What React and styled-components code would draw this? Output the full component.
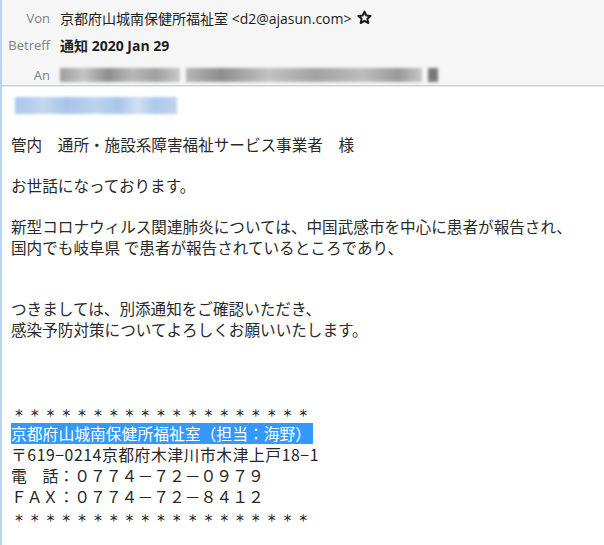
import React from 'react';
import styled, {createGlobalStyle} from 'styled-components';

const GlobalStyle = createGlobalStyle`
    html, body {
        margin:0;
        padding:0;
        background:#fff;
    }
`;

const Frame = styled.div`
    height:545px;
    overflow:hidden;
    border-left:2px solid #b9d4ee;
    box-sizing:border-box;
    background:#fff;
`;

const Header = styled.div`
    background:#f6f6f6;
    border-bottom:1px solid #c9ced3;
    box-shadow:0 1px 0 #e6edf3;
    height:86px;
    box-sizing:border-box;
    padding-top:4px;
    font-family:"Open Sans", "Noto Sans CJK JP", sans-serif;
`;

const HeaderRow = styled.div`
    display:grid;
    grid-template-columns:48px 1fr;
    column-gap:10px;
    align-items:center;
    height:27px;
    margin-top:${p => p.$offset || 0}px;
`;

const Label = styled.div`
    text-align:right;
    color:#808080;
    font-size:13px;
`;

const Value = styled.div`
    display:flex;
    align-items:center;
    gap:4px;
    color:#1e1e1e;
    font-size:14px;
    font-weight:${p => (p.$bold ? 700 : 400)};
    white-space:nowrap;
`;

const BlurGroup = styled.div`
    display:flex;
    align-items:center;
    gap:6px;
    filter:blur(1.6px);
`;

const BlurPiece = styled.div`
    height:14px;
    width:${p => p.$w}px;
    background:${p => p.$bg};
`;

const Body = styled.div`
    padding:11px 0 0 9px;
`;

const BlueBlur = styled.div`
    margin-left:4px;
    width:162px;
    height:17px;
    filter:blur(1.5px);
    background:linear-gradient(90deg, #a9c6ea 0%, #c2d6f0 18%, #a8c4e8 32%, #bcd3ef 50%, #a9c5ea 64%, #d2e0f3 76%, #adc8ea 86%, #bfd4ef 100%);
`;

const Text = styled.div`
    margin-top:20px;
    font-family:"Noto Sans CJK JP", "Noto Sans", sans-serif;
    font-size:15.6px;
    line-height:20.5px;
    color:#2a2a2a;
    white-space:pre;
`;

const Line = styled.div`
    height:20.5px;
`;

const Signature = styled.div`
    margin-top:1px;
    font-family:"Noto Sans CJK JP", "Noto Sans", sans-serif;
    font-size:15.8px;
    line-height:21.2px;
    color:#262626;
    white-space:pre;
`;

const SigLine = styled.div`
    display:flex;
    align-items:center;
    height:21.2px;
    letter-spacing:${p => p.$spacing || 0}px;
`;

const StarCell = styled.span`
    display:inline-block;
    width:15.8px;
    text-align:center;
    font-size:10px;
    color:#2e2e2e;
    font-weight:700;
`;

const Highlight = styled.span`
    display:inline-block;
    background:#3399ff;
    color:#fff;
    height:21.5px;
    padding-right:2px;
`;

function StarIcon() {
    return (
        <svg width="15" height="15" viewBox="0 0 24 24" style={{marginLeft: 2}}>
            <path d="M12 2.5l2.9 6.3 6.8.7-5.1 4.6 1.5 6.8L12 17.4l-6.1 3.5 1.5-6.8-5.1-4.6 6.8-.7z"
                fill="none" stroke="#1a1a1a" strokeWidth="3.2" strokeLinejoin="round" />
        </svg>
    );
}

function StarRow() {
    return (
        <SigLine>
            {Array.from({length: 19}).map((_, i) => <StarCell key={i}>＊</StarCell>)}
        </SigLine>
    );
}

const bodyLines = [
    '管内　通所・施設系障害福祉サービス事業者　様',
    '',
    'お世話になっております。',
    '',
    '新型コロナウィルス関連肺炎については、中国武感市を中心に患者が報告され、',
    '国内でも岐阜県 で患者が報告されているところであり、',
    '',
    '',
    'つきましては、別添通知をご確認いただき、',
    '感染予防対策についてよろしくお願いいたします。',
    '',
    '',
    '',
];

export default function App() {
    return (
        <Frame>
            <GlobalStyle />
            <Header>
                <HeaderRow>
                    <Label>Von</Label>
                    <Value>京都府山城南保健所福祉室 &lt;d2@ajasun.com&gt;<StarIcon /></Value>
                </HeaderRow>
                <HeaderRow>
                    <Label>Betreff</Label>
                    <Value $bold>通知 2020 Jan 29</Value>
                </HeaderRow>
                <HeaderRow $offset={3}>
                    <Label>An</Label>
                    <BlurGroup>
                        <BlurPiece $w={120} $bg="linear-gradient(90deg,#9d9d9d,#c4c4c4 20%,#8f8f8f 40%,#b8b8b8 60%,#a0a0a0 80%,#c9c9c9)" />
                        <BlurPiece $w={236} $bg="linear-gradient(90deg,#b5b5b5,#8e8e8e 15%,#c2c2c2 35%,#a3a3a3 55%,#bdbdbd 75%,#9a9a9a 90%,#c6c6c6)" />
                        <BlurPiece $w={10} $bg="#7a7a7a" />
                    </BlurGroup>
                </HeaderRow>
            </Header>
            <Body>
                <BlueBlur />
                <Text>
                    {bodyLines.map((l, i) => <Line key={i}>{l}</Line>)}
                </Text>
                <Signature>
                    <StarRow />
                    <SigLine><Highlight>京都府山城南保健所福祉室（担当：海野）</Highlight></SigLine>
                    <SigLine $spacing={0.55}>〒619−0214京都府木津川市木津上戸18−1</SigLine>
                    <SigLine>電　話：０７７４－７２－０９７９</SigLine>
                    <SigLine>ＦＡＸ：０７７４－７２－８４１２</SigLine>
                    <StarRow />
                </Signature>
            </Body>
        </Frame>
    );
}
